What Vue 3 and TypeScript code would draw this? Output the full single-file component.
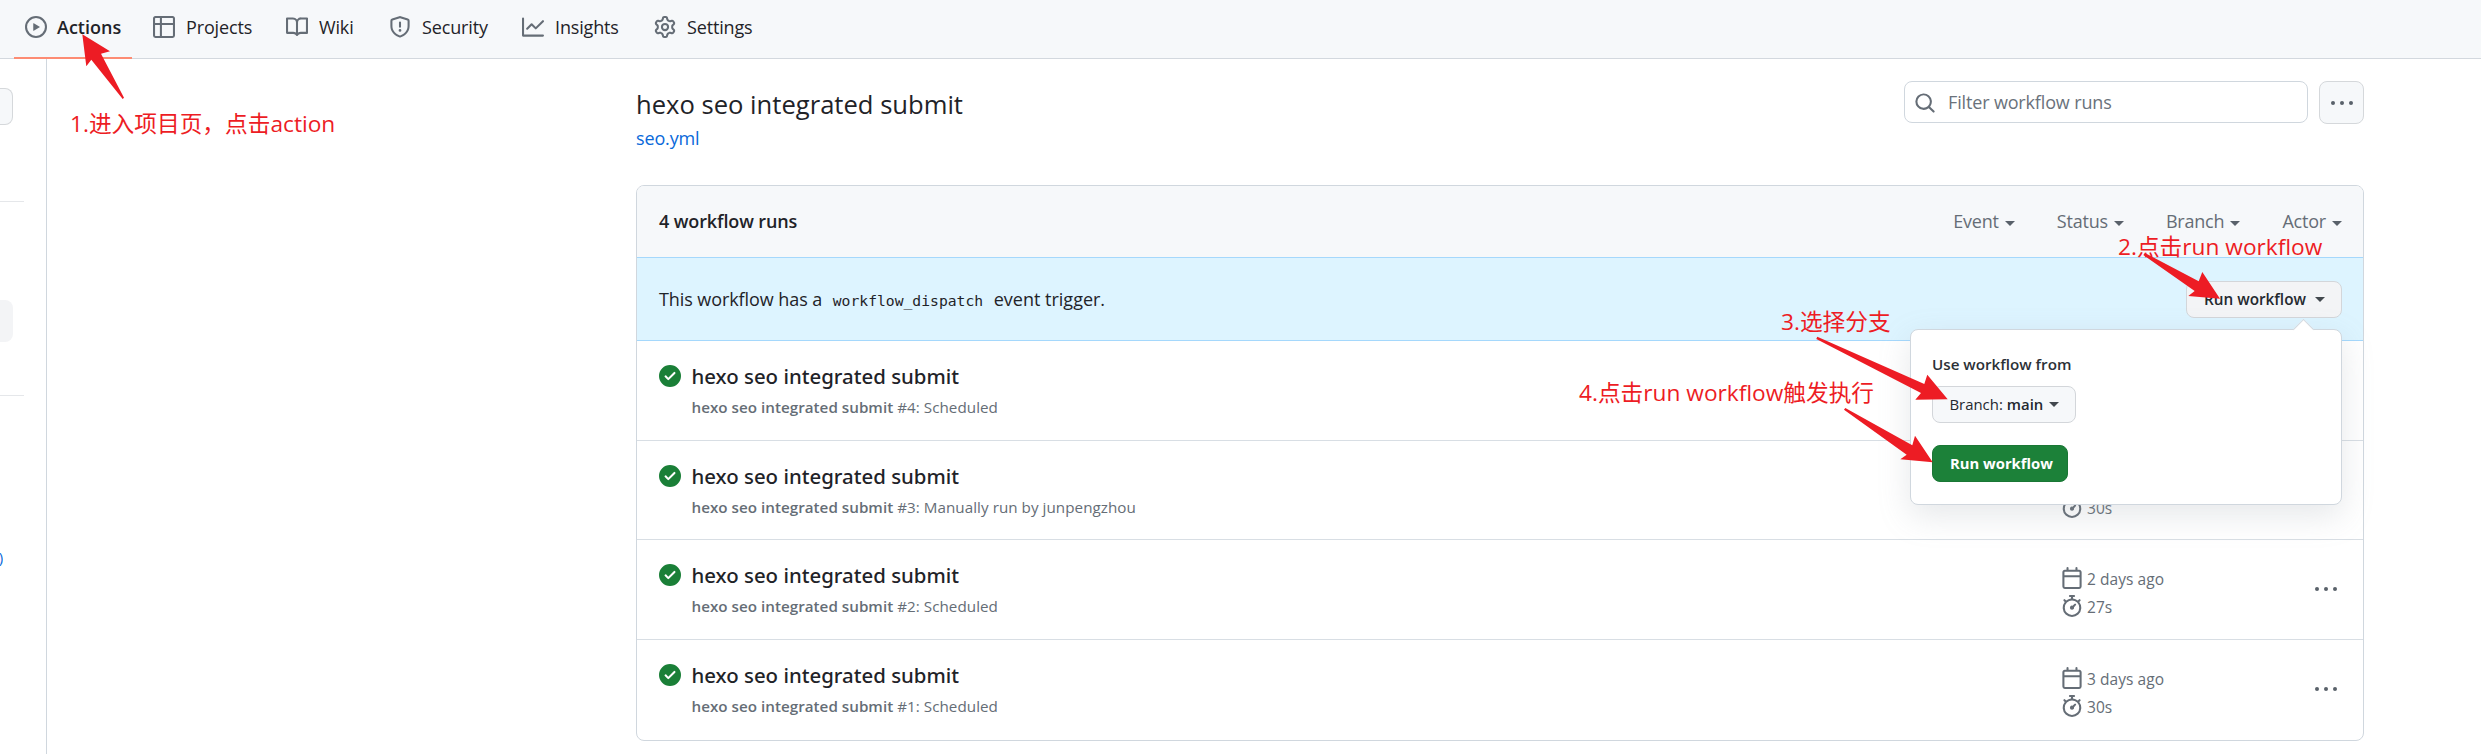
<script setup lang="ts">
interface NavItem {
  label: string
  icon: string
  active?: boolean
}

interface Run {
  id: number
  detail: string
  age: string
  duration: string
}

interface Note {
  key: string
  text: string
}

const icons = {
  play: 'M8 0a8 8 0 1 1 0 16A8 8 0 0 1 8 0ZM1.5 8a6.5 6.5 0 1 0 13 0 6.5 6.5 0 0 0-13 0Zm4.879-2.773 4.264 2.559a.25.25 0 0 1 0 .428l-4.264 2.559A.25.25 0 0 1 6 10.559V5.442a.25.25 0 0 1 .379-.215Z',
  table: 'M0 1.75C0 .784.784 0 1.75 0h12.5C15.216 0 16 .784 16 1.75v12.5A1.75 1.75 0 0 1 14.25 16H1.75A1.75 1.75 0 0 1 0 14.25ZM6.5 6.5v8h7.75a.25.25 0 0 0 .25-.25V6.5Zm8-1.5V1.75a.25.25 0 0 0-.25-.25H6.5V5Zm-13 1.5v7.75c0 .138.112.25.25.25H5v-8ZM5 5V1.5H1.75a.25.25 0 0 0-.25.25V5Z',
  book: 'M0 1.75A.75.75 0 0 1 .75 1h4.253c1.227 0 2.317.59 3 1.501A3.743 3.743 0 0 1 11.006 1h4.245a.75.75 0 0 1 .75.75v10.5a.75.75 0 0 1-.75.75h-4.507a2.25 2.25 0 0 0-1.591.659l-.622.621a.75.75 0 0 1-1.06 0l-.622-.621A2.25 2.25 0 0 0 5.258 13H.75a.75.75 0 0 1-.75-.75Zm7.251 10.324.004-5.073-.002-2.253A2.25 2.25 0 0 0 5.003 2.5H1.5v9h3.757a3.75 3.75 0 0 1 1.994.574ZM8.755 4.75l-.004 7.322a3.752 3.752 0 0 1 1.992-.572H14.5v-9h-3.495a2.25 2.25 0 0 0-2.25 2.25Z',
  shield: 'M7.467.133a1.748 1.748 0 0 1 1.066 0l5.25 1.68A1.75 1.75 0 0 1 15 3.48V7c0 1.566-.32 3.182-1.303 4.682-.983 1.498-2.585 2.813-5.032 3.855a1.697 1.697 0 0 1-1.33 0c-2.447-1.042-4.049-2.357-5.032-3.855C1.32 10.182 1 8.566 1 7V3.48a1.75 1.75 0 0 1 1.217-1.667Zm.61 1.429a.25.25 0 0 0-.153 0l-5.25 1.68a.25.25 0 0 0-.174.238V7c0 1.358.275 2.666 1.057 3.86.784 1.194 2.121 2.34 4.366 3.297a.196.196 0 0 0 .154 0c2.245-.956 3.582-2.104 4.366-3.298C13.225 9.666 13.5 8.36 13.5 7V3.48a.251.251 0 0 0-.174-.237l-5.25-1.68ZM8.75 4.75v3a.75.75 0 0 1-1.5 0v-3a.75.75 0 0 1 1.5 0ZM9 10.5a1 1 0 1 1-2 0 1 1 0 0 1 2 0Z',
  graph: 'M1.5 1.75V13.5h13.75a.75.75 0 0 1 0 1.5H.75a.75.75 0 0 1-.75-.75V1.75a.75.75 0 0 1 1.5 0Zm14.28 2.53-5.25 5.25a.75.75 0 0 1-1.06 0L7 7.06 4.28 9.78a.751.751 0 0 1-1.042-.018.751.751 0 0 1-.018-1.042l3.25-3.25a.75.75 0 0 1 1.06 0L10 7.94l4.72-4.72a.751.751 0 0 1 1.042.018.751.751 0 0 1 .018 1.042Z',
  gear: 'M8 0a8.2 8.2 0 0 1 .701.031C9.444.095 9.99.645 10.16 1.29l.288 1.107c.018.066.079.158.212.224.231.114.454.243.668.386.123.082.233.09.299.071l1.103-.303c.644-.176 1.392.021 1.82.63.27.385.506.792.704 1.218.315.675.111 1.422-.364 1.891l-.814.806c-.049.048-.098.147-.088.294.016.257.016.515 0 .772-.01.147.038.246.088.294l.814.806c.475.469.679 1.216.364 1.891a7.977 7.977 0 0 1-.704 1.217c-.428.61-1.176.807-1.82.63l-1.102-.302c-.067-.019-.177-.011-.3.071a5.909 5.909 0 0 1-.668.386c-.133.066-.194.158-.211.224l-.29 1.106c-.168.646-.715 1.196-1.458 1.26a8.006 8.006 0 0 1-1.402 0c-.743-.064-1.289-.614-1.458-1.26l-.289-1.106c-.018-.066-.079-.158-.212-.224a5.738 5.738 0 0 1-.668-.386c-.123-.082-.233-.09-.299-.071l-1.103.303c-.644.176-1.392-.021-1.82-.63a8.12 8.12 0 0 1-.704-1.218c-.315-.675-.111-1.422.363-1.891l.815-.806c.05-.048.098-.147.088-.294a6.214 6.214 0 0 1 0-.772c.01-.147-.038-.246-.088-.294l-.815-.806C.635 6.045.431 5.298.746 4.623a7.92 7.92 0 0 1 .704-1.217c.428-.61 1.176-.807 1.82-.63l1.102.302c.067.019.177.011.3-.071.214-.143.437-.272.668-.386.133-.066.194-.158.211-.224l.29-1.106C6.009.645 6.556.095 7.299.03 7.53.01 7.764 0 8 0Zm-.571 1.525c-.036.003-.108.036-.137.146l-.289 1.105c-.147.561-.549.967-.998 1.189-.173.086-.34.183-.5.29-.417.278-.97.423-1.529.27l-1.103-.303c-.109-.03-.175.016-.195.045-.22.312-.412.644-.573.99-.014.031-.021.11.059.19l.815.806c.411.406.562.957.53 1.456a4.709 4.709 0 0 0 0 .582c.032.499-.119 1.05-.53 1.456l-.815.806c-.081.08-.073.159-.059.19.162.346.353.677.573.989.02.03.085.076.195.046l1.102-.303c.56-.153 1.113-.008 1.53.27.161.107.328.204.501.29.447.222.85.629.997 1.189l.289 1.105c.029.109.101.143.137.146a6.6 6.6 0 0 0 1.142 0c.036-.003.108-.036.137-.146l.289-1.105c.147-.561.549-.967.998-1.189.173-.086.34-.183.5-.29.417-.278.97-.423 1.529-.27l1.103.303c.109.029.175-.016.195-.045.22-.313.411-.644.573-.99.014-.031.021-.11-.059-.19l-.815-.806c-.411-.406-.562-.957-.53-1.456a4.709 4.709 0 0 0 0-.582c-.032-.499.119-1.05.53-1.456l.815-.806c.081-.08.073-.159.059-.19a6.464 6.464 0 0 0-.573-.989c-.02-.03-.085-.076-.195-.046l-1.102.303c-.56.153-1.113.008-1.53-.27a4.44 4.44 0 0 0-.501-.29c-.447-.222-.85-.629-.997-1.189l-.289-1.105c-.029-.11-.101-.143-.137-.146a6.6 6.6 0 0 0-1.142 0ZM11 8a3 3 0 1 1-6 0 3 3 0 0 1 6 0ZM9.5 8a1.5 1.5 0 1 0-3.001.001A1.5 1.5 0 0 0 9.5 8Z',
  search: 'M10.68 11.74a6 6 0 0 1-7.922-8.982 6 6 0 0 1 8.982 7.922l3.04 3.04a.749.749 0 0 1-.326 1.275.749.749 0 0 1-.734-.215ZM11.5 7a4.499 4.499 0 1 0-8.997 0A4.499 4.499 0 0 0 11.5 7Z',
  check: 'M8 16A8 8 0 1 1 8 0a8 8 0 0 1 0 16Zm3.78-9.72a.751.751 0 0 0-.018-1.042.751.751 0 0 0-1.042-.018L6.75 9.19 5.28 7.72a.751.751 0 0 0-1.042.018.751.751 0 0 0-.018 1.042l2 2a.75.75 0 0 0 1.06 0Z',
  calendar: 'M4.75 0a.75.75 0 0 1 .75.75V2h5V.75a.75.75 0 0 1 1.5 0V2h1.25c.966 0 1.75.784 1.75 1.75v10.5A1.75 1.75 0 0 1 13.25 16H2.75A1.75 1.75 0 0 1 1 14.25V3.75C1 2.784 1.784 2 2.75 2H4V.75A.75.75 0 0 1 4.75 0ZM2.5 7.5v6.75c0 .138.112.25.25.25h10.5a.25.25 0 0 0 .25-.25V7.5Zm10.75-4H2.75a.25.25 0 0 0-.25.25V6h11V3.75a.25.25 0 0 0-.25-.25Z',
  stopwatch: 'M5.75.75A.75.75 0 0 1 6.5 0h3a.75.75 0 0 1 0 1.5h-.75v1l-.001.041a6.724 6.724 0 0 1 3.464 1.435l.007-.006.75-.75a.749.749 0 0 1 1.275.326.749.749 0 0 1-.215.734l-.75.75-.006.007a6.75 6.75 0 1 1-10.548 0L2.72 5.03l-.75-.75a.751.751 0 0 1 .018-1.042.751.751 0 0 1 1.042-.018l.75.75.007.006A6.72 6.72 0 0 1 7.25 2.541V1.5H6.5a.75.75 0 0 1-.75-.75ZM8 14.5a5.25 5.25 0 1 0 0-10.5 5.25 5.25 0 0 0 0 10.5Zm.389-6.7 1.33-1.33a.75.75 0 1 1 1.061 1.06L9.45 8.861A1.503 1.503 0 0 1 8 10.75a1.499 1.499 0 1 1 .389-2.95Z',
}

const nav: NavItem[] = [
  { label: 'Actions', icon: icons.play, active: true },
  { label: 'Projects', icon: icons.table },
  { label: 'Wiki', icon: icons.book },
  { label: 'Security', icon: icons.shield },
  { label: 'Insights', icon: icons.graph },
  { label: 'Settings', icon: icons.gear },
]

const filters: string[] = ['Event', 'Status', 'Branch', 'Actor']

const workflow = 'hexo seo integrated submit'

const runs: Run[] = [
  { id: 4, detail: 'Scheduled', age: 'yesterday', duration: '30s' },
  { id: 3, detail: 'Manually run by junpengzhou', age: '2 days ago', duration: '30s' },
  { id: 2, detail: 'Scheduled', age: '2 days ago', duration: '27s' },
  { id: 1, detail: 'Scheduled', age: '3 days ago', duration: '30s' },
]

const notes: Note[] = [
  { key: 'n1', text: '1.进入项目页，点击action' },
  { key: 'n2', text: '2.点击run workflow' },
  { key: 'n3', text: '3.选择分支' },
  { key: 'n4', text: '4.点击run workflow触发执行' },
]

const arrows: string[] = [
  '82.3,34.3 110,51.3 101,53.7 124,97.7 122.7,99 91.3,59.7 86.3,66.3',
  '2220,298.7 2202.3,272 2198.7,281.3 2145,253 2143.3,255 2194.7,291 2188.3,296',
  '1947.7,399.3 1927.3,374.7 1924.3,384 1817.3,336.7 1816.3,339 1921,393 1915.3,399.7',
  '1932.7,462.3 1915,435.7 1912.3,445.3 1845.3,408 1844,409.7 1906.7,454.7 1900.3,459.3',
]
</script>

<template>
  <div class="page">
    <nav class="topnav">
      <a v-for="item in nav" :key="item.label" class="tab" :class="{ active: item.active }">
        <svg class="icon" viewBox="0 0 16 16"><path :d="item.icon" /></svg>
        <span>{{ item.label }}</span>
      </a>
    </nav>

    <div class="body">
      <aside class="side">
        <div class="side-button"></div>
        <div class="side-rule"></div>
        <div class="side-selected"></div>
        <div class="side-rule thick"></div>
        <div class="side-link"><span>)</span></div>
      </aside>

      <main class="main">
        <header class="head">
          <div class="titles">
            <h1>{{ workflow }}</h1>
            <a class="file">seo.yml</a>
          </div>
          <div class="tools">
            <div class="search">
              <svg class="icon" viewBox="0 0 16 16"><path :d="icons.search" /></svg>
              <span>Filter workflow runs</span>
            </div>
            <div class="more-button">
              <svg class="dots" viewBox="0 0 22 4"><circle cx="2" cy="2" r="2" /><circle cx="11" cy="2" r="2" /><circle cx="20" cy="2" r="2" /></svg>
            </div>
          </div>
        </header>

        <section class="box">
          <div class="box-head">
            <strong>4 workflow runs</strong>
            <div class="filters">
              <span v-for="f in filters" :key="f" class="filter">{{ f }}<i class="caret"></i></span>
            </div>
          </div>

          <div class="dispatch">
            <p>This workflow has a <code>workflow_dispatch</code> <span class="tail">event trigger.</span></p>
            <div class="menu">
              <button class="btn run">Run workflow<i class="caret"></i></button>
              <div class="popover">
                <div class="label">Use workflow from</div>
                <button class="btn branch"><span>Branch:</span><b>main</b><i class="caret"></i></button>
                <button class="btn primary">Run workflow</button>
              </div>
            </div>
          </div>

          <div class="rows">
            <div v-for="run in runs" :key="run.id" class="row">
              <svg class="icon ok" viewBox="0 0 16 16"><path :d="icons.check" /></svg>
              <div class="info">
                <div class="name">{{ workflow }}</div>
                <div class="sub"><b>{{ workflow }}</b> #{{ run.id }}: {{ run.detail }}</div>
              </div>
              <div class="meta">
                <div class="stat"><svg class="icon" viewBox="0 0 16 16"><path :d="icons.calendar" /></svg><span>{{ run.age }}</span></div>
                <div class="stat"><svg class="icon" viewBox="0 0 16 16"><path :d="icons.stopwatch" /></svg><span>{{ run.duration }}</span></div>
              </div>
              <svg class="dots" viewBox="0 0 22 4"><circle cx="2" cy="2" r="2" /><circle cx="11" cy="2" r="2" /><circle cx="20" cy="2" r="2" /></svg>
            </div>
          </div>
        </section>
      </main>
    </div>

    <svg class="arrows" viewBox="0 0 2481 754">
      <polygon v-for="a in arrows" :key="a" :points="a" />
    </svg>
    <div v-for="n in notes" :key="n.key" class="note" :class="n.key">{{ n.text }}</div>
  </div>
</template>

<style>
body {
  margin: 0;
  background: #fff;
}
</style>

<style scoped>
* {
  box-sizing: border-box;
}
.page {
  position: relative;
  width: 2481px;
  height: 754px;
  overflow: hidden;
  display: flex;
  flex-direction: column;
  font-family: "Open Sans", "Noto Sans", "Noto Sans CJK SC", sans-serif;
  font-size: 18px;
  letter-spacing: -0.15px;
  color: #1f2328;
  background: #fff;
}
.icon {
  width: 22px;
  height: 22px;
  flex: none;
  fill: #656d76;
}
.topnav {
  flex: none;
  height: 59px;
  padding-left: 14px;
  display: grid;
  grid-template-columns: 128px 133px 103px 133px 132px 132px;
  background: #f6f8fa;
  border-bottom: 1px solid #d3d8de;
}
.tab {
  display: flex;
  align-items: center;
  gap: 11px;
  height: 59px;
  padding: 0 0 5px 11px;
}
.tab.active {
  width: 118px;
  gap: 10px;
  padding-bottom: 3px;
  border-bottom: 2px solid #fd8c73;
  font-weight: 600;
  letter-spacing: 0;
}
.body {
  flex: 1;
  display: flex;
}
.side {
  flex: none;
  width: 47px;
  border-right: 1px solid #d0d7de;
  padding-top: 29px;
}
.side-button {
  width: 13px;
  height: 37px;
  border: 1px solid #d5d8db;
  border-left: 0;
  border-radius: 0 8px 8px 0;
  background: #f6f8fa;
}
.side-rule {
  width: 24px;
  height: 1px;
  margin-top: 76px;
  background: #e5e7ea;
}
.side-selected {
  width: 13px;
  height: 42px;
  margin-top: 98px;
  border-radius: 0 8px 8px 0;
  background: #f3f4f6;
}
.side-rule.thick {
  margin-top: 53px;
}
.side-link {
  width: 3px;
  height: 30px;
  margin-top: 146px;
  overflow: hidden;
  display: flex;
  justify-content: flex-end;
  font-size: 15px;
  line-height: 30px;
  color: #0969da;
}
.main {
  width: 1728px;
  margin-left: 589px;
}
.head {
  height: 126px;
  display: flex;
  justify-content: space-between;
}
.titles {
  padding-top: 28px;
}
h1 {
  margin: 0;
  font-size: 25.6px;
  font-weight: 400;
  line-height: 36px;
  letter-spacing: 0;
}
.file {
  display: block;
  line-height: 30px;
  color: #0969da;
}
.tools {
  display: flex;
  gap: 11px;
  padding-top: 22px;
}
.search {
  width: 404px;
  height: 42px;
  display: flex;
  align-items: center;
  gap: 12px;
  padding: 2px 0 0 9px;
  border: 1px solid #d0d7de;
  border-radius: 8px;
  color: #6a727b;
}
.search span {
  padding-bottom: 3px;
}
.more-button {
  width: 45px;
  height: 43px;
  display: flex;
  align-items: center;
  justify-content: center;
  border: 1px solid #d5d8db;
  border-radius: 8px;
  background: #f6f8fa;
}
.dots {
  width: 22px;
  height: 4px;
  flex: none;
  fill: #59616a;
}
.box {
  border: 1px solid #d0d7de;
  border-radius: 8px;
}
.box-head {
  height: 71px;
  padding: 0 21px 1px 22px;
  display: flex;
  align-items: center;
  justify-content: space-between;
  background: #f6f8fa;
  border-radius: 7px 7px 0 0;
}
.box-head strong {
  font-weight: 600;
  letter-spacing: -0.12px;
}
.filters {
  display: flex;
  gap: 42px;
  letter-spacing: -0.2px;
  color: #656d76;
}
.filter {
  display: flex;
  align-items: center;
}
.caret {
  display: inline-block;
  margin-left: 6px;
  margin-top: 5px;
  border: 5px solid transparent;
  border-top-color: #59616a;
  border-bottom: 0;
}
.dispatch {
  height: 84px;
  padding: 0 21px 0 22px;
  display: flex;
  align-items: center;
  justify-content: space-between;
  background: #ddf4ff;
  border-top: 1px solid #a5d8fc;
  border-bottom: 1px solid #a5d8fc;
}
.dispatch p {
  margin: 0;
  letter-spacing: -0.08px;
}
.dispatch .tail {
  letter-spacing: 0;
}
code {
  padding: 0 6px;
  font-family: "DejaVu Sans Mono", monospace;
  font-size: 14.7px;
  letter-spacing: 0;
}
.menu {
  position: relative;
}
.btn {
  display: flex;
  align-items: center;
  height: 37px;
  padding: 0 17px;
  border: 1px solid #d3d6da;
  border-radius: 8px;
  background: #f6f8fa;
  font-family: inherit;
  font-size: 15.3px;
  font-weight: 600;
  letter-spacing: 0;
  white-space: nowrap;
  color: #24292f;
}
.btn .caret {
  margin-top: 1px;
  border-top-color: #42484e;
}
.run {
  width: 156px;
  justify-content: space-between;
  padding-right: 16px;
  background: #f3f4f6;
}
.popover {
  position: absolute;
  z-index: 2;
  top: 48px;
  right: 0;
  width: 432px;
  height: 176px;
  padding: 21px;
  border: 1px solid #d0d7de;
  border-radius: 8px;
  background: #fff;
  box-shadow: 0 11px 32px rgba(140, 149, 159, 0.22);
}
.popover::before {
  content: "";
  position: absolute;
  top: -8px;
  right: 30px;
  width: 14px;
  height: 14px;
  background: #fff;
  border: 1px solid #d0d7de;
  border-right: 0;
  border-bottom: 0;
  transform: rotate(45deg);
}
.label {
  height: 35px;
  line-height: 26px;
  font-size: 15.2px;
  font-weight: 600;
  letter-spacing: 0;
  color: #2c3137;
}
.branch {
  width: 144px;
  padding-left: 16.5px;
  font-size: 14.9px;
}
.branch span {
  font-weight: 400;
}
.branch b {
  margin-left: 4px;
  font-weight: 600;
}
.primary {
  width: 136px;
  margin-top: 22px;
  font-size: 14.8px;
  font-weight: 700;
  color: #fff;
  background: #1c8139;
  border-color: #1a7735;
}
.rows {
  display: grid;
  grid-template-rows: 100px 99px 100px 100px;
}
.row {
  display: flex;
  align-items: flex-start;
  padding: 0 26px 0 22px;
  border-bottom: 1px solid #d8dee4;
}
.row:last-child {
  border-bottom: 0;
}
.ok {
  margin-top: 24px;
  fill: #1a7f37;
}
.info {
  flex: 1;
  padding: 20px 0 0 10.5px;
}
.name {
  font-family: "Noto Sans", "Open Sans", sans-serif;
  font-size: 20.4px;
  font-weight: 500;
  line-height: 30px;
  letter-spacing: 0;
}
.sub {
  font-size: 15.2px;
  line-height: 32px;
  letter-spacing: 0.05px;
  color: #656d76;
}
.sub b {
  font-weight: 600;
  letter-spacing: 0.02px;
}
.meta {
  width: 254px;
  padding-top: 24px;
}
.stat {
  display: flex;
  align-items: center;
  height: 28px;
  gap: 4px;
  font-size: 15.5px;
  letter-spacing: 0.05px;
  color: #656d76;
}
.stat span {
  padding-top: 2px;
}
.row .dots {
  margin-top: 47px;
}
.arrows {
  position: absolute;
  z-index: 3;
  left: 0;
  top: 0;
  width: 2481px;
  height: 754px;
  fill: #ed1c24;
}
.note {
  position: absolute;
  z-index: 3;
  font-size: 22.7px;
  line-height: 30px;
  letter-spacing: 0;
  white-space: nowrap;
  color: #ed1c24;
}
.n1 {
  left: 70px;
  top: 109px;
}
.n2 {
  left: 2118px;
  top: 232px;
}
.n3 {
  left: 1781px;
  top: 307px;
}
.n4 {
  left: 1579px;
  top: 378px;
}
</style>
